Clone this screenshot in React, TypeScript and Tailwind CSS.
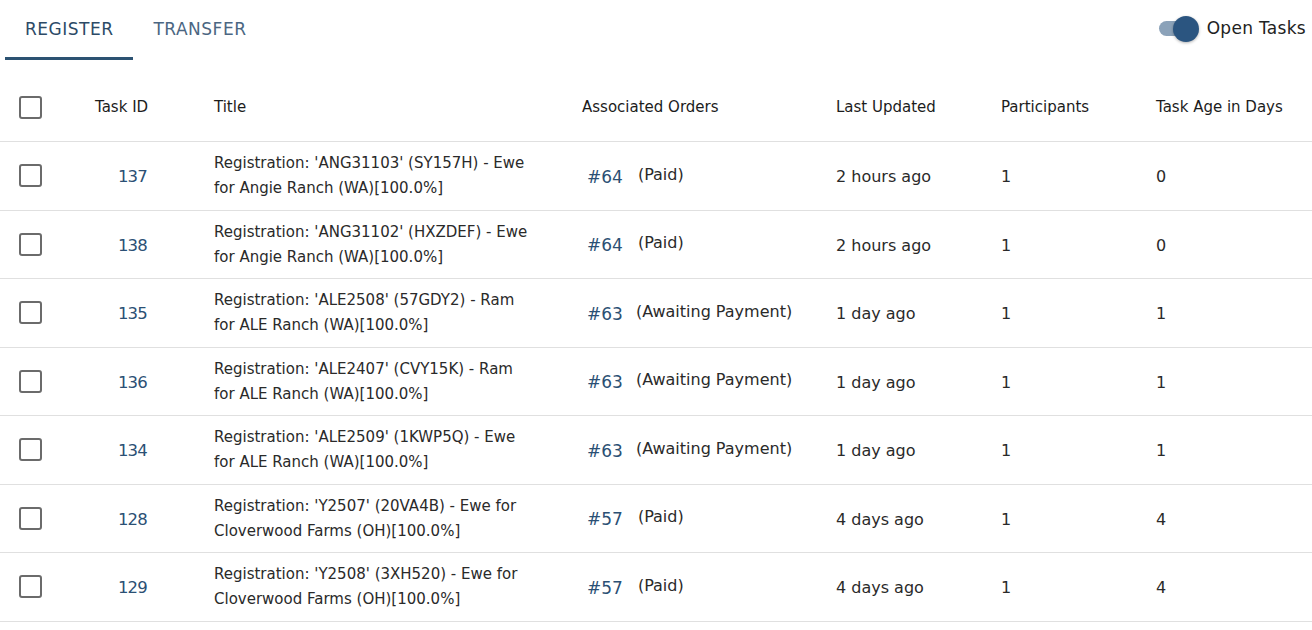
import { useState } from 'react';

type Task = {
  id: number;
  title: [string, string];
  order: number;
  status: string;
  updated: string;
  participants: number;
  age: number;
};

const tasks: Task[] = [
  { id: 137, title: ["Registration: 'ANG31103' (SY157H) - Ewe", 'for Angie Ranch (WA)[100.0%]'], order: 64, status: '(Paid)', updated: '2 hours ago', participants: 1, age: 0 },
  { id: 138, title: ["Registration: 'ANG31102' (HXZDEF) - Ewe", 'for Angie Ranch (WA)[100.0%]'], order: 64, status: '(Paid)', updated: '2 hours ago', participants: 1, age: 0 },
  { id: 135, title: ["Registration: 'ALE2508' (57GDY2) - Ram", 'for ALE Ranch (WA)[100.0%]'], order: 63, status: '(Awaiting Payment)', updated: '1 day ago', participants: 1, age: 1 },
  { id: 136, title: ["Registration: 'ALE2407' (CVY15K) - Ram", 'for ALE Ranch (WA)[100.0%]'], order: 63, status: '(Awaiting Payment)', updated: '1 day ago', participants: 1, age: 1 },
  { id: 134, title: ["Registration: 'ALE2509' (1KWP5Q) - Ewe", 'for ALE Ranch (WA)[100.0%]'], order: 63, status: '(Awaiting Payment)', updated: '1 day ago', participants: 1, age: 1 },
  { id: 128, title: ["Registration: 'Y2507' (20VA4B) - Ewe for", 'Cloverwood Farms (OH)[100.0%]'], order: 57, status: '(Paid)', updated: '4 days ago', participants: 1, age: 4 },
  { id: 129, title: ["Registration: 'Y2508' (3XH520) - Ewe for", 'Cloverwood Farms (OH)[100.0%]'], order: 57, status: '(Paid)', updated: '4 days ago', participants: 1, age: 4 },
];

const cols = 'grid grid-cols-[79px_119px_368px_254px_165px_155px_1fr]';

function Checkbox() {
  return <div className="w-[23px] h-[23px] rounded-[3px] border-2 border-[#6b6b6b] bg-white" />;
}

export default function App() {
  const [tab, setTab] = useState<'register' | 'transfer'>('register');
  const [open, setOpen] = useState(true);

  return (
    <div className="w-[1312px] h-[630px] bg-white text-[#222] overflow-hidden font-['DejaVu_Sans',sans-serif]">
      {/* Tabs + toggle */}
      <div className="flex items-start justify-between">
        <div className="flex pl-[5px]">
          {(['register', 'transfer'] as const).map((t) => (
            <button
              key={t}
              onClick={() => setTab(t)}
              className={`h-[60px] pt-[3px] px-[20px] text-[17px] tracking-[0.5px] uppercase border-b-[3px] ${
                tab === t ? 'border-[#2c5272] text-[#2c4a66]' : 'border-transparent text-[#4b6682]'
              }`}
            >
              {t}
            </button>
          ))}
        </div>
        <div className="flex items-center h-[57px] pr-[6px]">
          <button onClick={() => setOpen(!open)} className="relative w-[41px] h-[28px] flex items-center">
            <span className="absolute left-0 right-[4px] h-[15px] rounded-full bg-[#8ba2b9]" />
            <span
              className={`absolute w-[26px] h-[26px] rounded-full bg-[#2b5580] shadow-[0_1px_3px_rgba(0,0,0,0.3)] ${
                open ? 'left-[14px]' : 'left-0'
              }`}
            />
          </button>
          <span className="ml-[7px] text-[17px] tracking-[0.3px] text-[#222]">Open Tasks</span>
        </div>
      </div>

      {/* Header */}
      <div className={`${cols} mt-[13px] h-[69px] items-center border-b border-[#e0e0e0] text-[15px] text-[#1c1c1c]`}>
        <div className="pl-[19px]"><Checkbox /></div>
        <div className="pl-[16px]">Task ID</div>
        <div className="pl-[16px]">Title</div>
        <div className="pl-[16px]">Associated Orders</div>
        <div className="pl-[16px]">Last Updated</div>
        <div className="pl-[16px]">Participants</div>
        <div className="pl-[16px]">Task Age in Days</div>
      </div>

      {tasks.map((t) => (
        <div key={t.id} className={`${cols} h-[68.5px] items-center border-b border-[#e0e0e0] text-[16px] text-[#2a2a2a]`}>
          <div className="pl-[19px]"><Checkbox /></div>
          <div className="text-right pr-[51px] text-[16.5px] tracking-[-0.8px] text-[#2b5074] mt-[4px]">{t.id}</div>
          <div className="pl-[16px] text-[15px] leading-[25px] mt-[1px]">
            <div>{t.title[0]}</div>
            <div>{t.title[1]}</div>
          </div>
          <div className="pl-[21px] flex items-center">
            <span className="text-[17px] text-[#2b5074] mt-[3px]">#{t.order}</span>
            <span className={`${t.status === '(Paid)' ? 'ml-[15px]' : 'ml-[13px]'} -mt-[2px]`}>{t.status}</span>
          </div>
          <div className="pl-[16px] mt-[3px]">{t.updated}</div>
          <div className="pl-[16px] mt-[3px]">{t.participants}</div>
          <div className="pl-[16px] mt-[3px]">{t.age}</div>
        </div>
      ))}
    </div>
  );
}
